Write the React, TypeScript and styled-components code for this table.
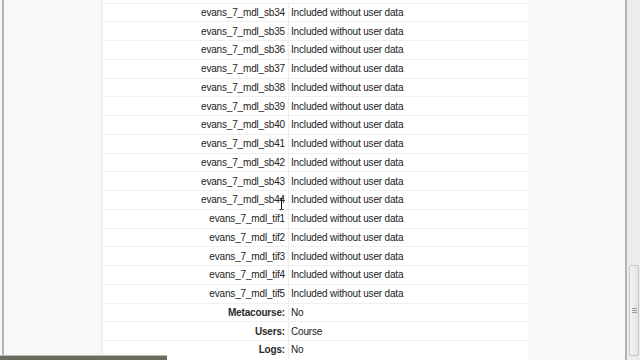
import React from 'react';
import styled, { createGlobalStyle } from 'styled-components';

const GlobalStyle = createGlobalStyle`
    html, body {
        margin: 0;
        padding: 0;
        background: #f8f8f8;
    }
    body {
        font-family: 'Liberation Sans', Arial, sans-serif;
    }
`;

const Page = styled.div`
    position: relative;
    display: flex;
    flex-flow: row nowrap;
    width: 640px;
    height: 360px;
    overflow: hidden;
    padding-left: 2px;
    box-sizing: border-box;
`;

const EdgeLine = styled.div`
    width: 2px;
    flex-shrink: 0;
    background: #aab9b8;
`;

const Main = styled.div`
    width: 621px;
    flex-shrink: 0;
    background: #f8f8f8;
`;

const Panel = styled.div`
    margin-left: 98px;
    width: 425px;
    min-height: 400px;
    padding-top: 2.5px;
    background: #ffffff;
    border-left: 1px solid #ededed;
    box-shadow: -1px 0 2px rgba(0, 0, 0, 0.03);
`;

const DataTable = styled.div`
    display: grid;
    grid-template-columns: 185px 1fr;
    grid-auto-rows: 18.75px;
    margin-left: 1px;
`;

const Cell = styled.div<{ $label?: boolean }>`
    display: flex;
    align-items: center;
    justify-content: ${(p) => (p.$label ? 'flex-end' : 'flex-start')};
    padding: ${(p) => (p.$label ? '0 3px 0 0' : '0 0 0 2px')};
    border-top: 1px solid #f0f0f0;
    border-right: ${(p) => (p.$label ? '1px solid #ededed' : 'none')};
    font-size: 10px;
    letter-spacing: -0.17px;
    color: #222;
    white-space: nowrap;
    box-sizing: border-box;
`;

const LabelText = styled.span<{ $bold?: boolean }>`
    font-weight: ${(p) => (p.$bold ? 'bold' : 'normal')};
    color: ${(p) => (p.$bold ? '#2a2a2a' : '#222')};
`;

const ScrollBar = styled.div`
    width: 13px;
    flex-shrink: 0;
    display: flex;
    flex-flow: column;
    justify-content: flex-end;
    background: #ececec;
    padding-bottom: 4px;
    box-sizing: border-box;
`;

const Thumb = styled.div`
    margin: 0 1px 0 2px;
    height: 89px;
    display: flex;
    align-items: center;
    justify-content: center;
    background: linear-gradient(to right, #f4f4f4, #e2e2e2);
    border: 1px solid #c8c8c8;
    border-radius: 2px;
`;

const Grip = styled.div`
    width: 5px;
    height: 5px;
    background: repeating-linear-gradient(to bottom, #9a9a9a 0 1px, transparent 1px 2px);
`;

const Taskbar = styled.div`
    position: absolute;
    left: 0;
    bottom: 0;
    width: 167px;
    height: 4px;
    background: #6c6b60;
    border-top: 1px solid #b9b8ad;
`;

const Cursor = styled.svg`
    position: absolute;
    left: 279px;
    top: 198px;
`;

type Row = { label: string; value: string; bold?: boolean };

const rows: Row[] = [
    ...['sb34', 'sb35', 'sb36', 'sb37', 'sb38', 'sb39', 'sb40', 'sb41', 'sb42', 'sb43', 'sb44', 'tif1', 'tif2', 'tif3', 'tif4', 'tif5'].map(
        (s) => ({ label: `evans_7_mdl_${s}`, value: 'Included without user data' })
    ),
    { label: 'Metacourse:', value: 'No', bold: true },
    { label: 'Users:', value: 'Course', bold: true },
    { label: 'Logs:', value: 'No', bold: true }
];

const App = () => {
    return (
        <>
            <GlobalStyle />
            <Page>
                <EdgeLine />
                <Main>
                    <Panel>
                        <DataTable>
                            {rows.map((r) => (
                                <React.Fragment key={r.label}>
                                    <Cell $label>
                                        <LabelText $bold={r.bold}>{r.label}</LabelText>
                                    </Cell>
                                    <Cell>{r.value}</Cell>
                                </React.Fragment>
                            ))}
                        </DataTable>
                    </Panel>
                </Main>
                <EdgeLine />
                <ScrollBar>
                    <Thumb>
                        <Grip />
                    </Thumb>
                </ScrollBar>
                <Taskbar />
                <Cursor width="5" height="12" viewBox="0 0 5 12">
                    <path d="M0.5 0.5h1.5l0.5 0.5 0.5-0.5h1.5M2.5 1v10M0.5 11.5h1.5l0.5-0.5 0.5 0.5h1.5" stroke="#111" strokeWidth="1" fill="none" />
                </Cursor>
            </Page>
        </>
    );
};

export default App;
